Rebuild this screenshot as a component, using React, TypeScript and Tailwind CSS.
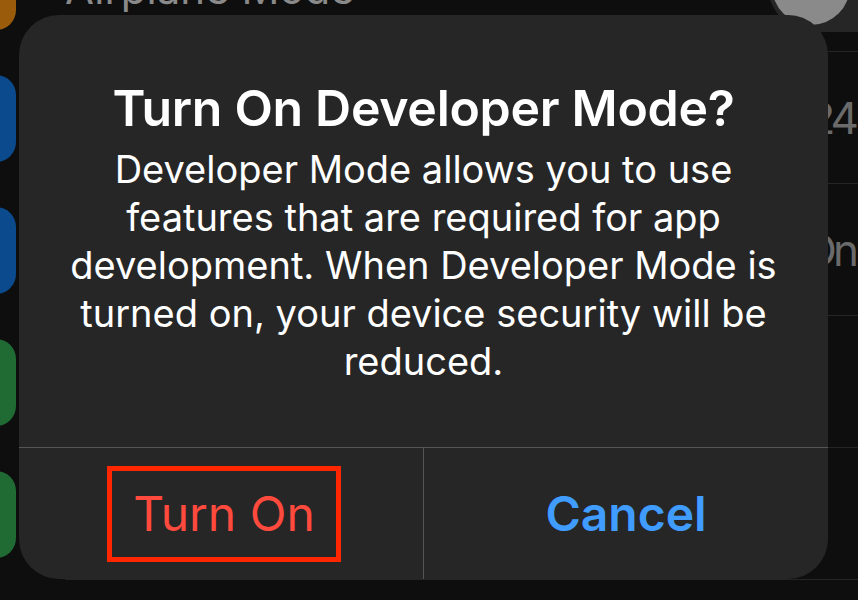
import React from "react";

const rows = [
    { label: "Airplane Mode", color: "bg-[#9a5c0b]", value: "", toggle: true },
    { label: "Wi-Fi", color: "bg-[#0b4a8c]", value: "24", toggle: false },
    { label: "Bluetooth", color: "bg-[#0b4a8c]", value: "On", toggle: false },
    { label: "Cellular", color: "bg-[#1f6b33]", value: "", toggle: false },
    { label: "Personal Hotspot", color: "bg-[#1f6b33]", value: "", toggle: false },
];

function SettingsList() {
    return (
        <div className="flex flex-col mt-[-80px]">
            {rows.map((row, index) => (
                <div key={index} className="flex items-center h-[132px] shrink-0 overflow-hidden">
                    <div className={`ml-[-71px] w-[87px] h-[87px] rounded-[20px] shrink-0 ${row.color}`}></div>
                    <div className="flex items-center flex-1 min-w-0 h-full ml-[49px] border-b border-[#252525]">
                        <span className="flex-1 min-w-0 mt-[6px] text-[42px] text-[#8a8a8a] whitespace-nowrap">
                            {row.label}
                        </span>
                        {row.toggle ? (
                            <div className="w-[150px] h-[93px] rounded-full bg-[#262626] mr-[-60px] flex items-center pl-[4px] shrink-0">
                                <div className="w-[78px] h-[78px] rounded-full bg-[#8a8a8a]"></div>
                            </div>
                        ) : (
                            <span className="text-[44px] text-[#6a6a6a] pr-[3px] tracking-[-4px] whitespace-nowrap">
                                {row.value}
                            </span>
                        )}
                    </div>
                </div>
            ))}
        </div>
    );
}

function App() {
    return (
        <div
            className="relative w-[858px] h-[600px] overflow-hidden bg-[#0e0e0e]"
            style={{ fontFamily: "Inter, 'Noto Sans', sans-serif" }}
        >
            <SettingsList />

            <div className="absolute left-[19px] top-[15px] w-[809px] h-[564px] rounded-[40px] bg-[#262626] flex flex-col">
                <div className="h-[432px] flex flex-col items-center pt-[64px] text-white text-center">
                    <h2 className="text-[50px] font-semibold leading-[58px] tracking-[-0.3px]">
                        Turn On Developer Mode?
                    </h2>
                    <p className="text-[38px] leading-[48px] mt-[8px]">
                        Developer Mode allows you to use
                        <br />
                        features that are required for app
                        <br />
                        development. When Developer Mode is
                        <br />
                        turned on, your device security will be
                        <br />
                        reduced.
                    </p>
                </div>
                <div className="h-px bg-[#555555]"></div>
                <div className="flex flex-1">
                    <div className="flex-1 flex items-center justify-center border-r border-[#555555]">
                        <div className="ml-[6px] border-[5px] border-[#ff2600] px-[21px] h-[96px] flex items-center">
                            <span className="text-[48px] text-[#ff4a3d]">Turn On</span>
                        </div>
                    </div>
                    <div className="flex-1 flex items-center justify-center">
                        <span className="text-[48px] font-semibold text-[#409cff]">Cancel</span>
                    </div>
                </div>
            </div>
        </div>
    );
}

export default App;
